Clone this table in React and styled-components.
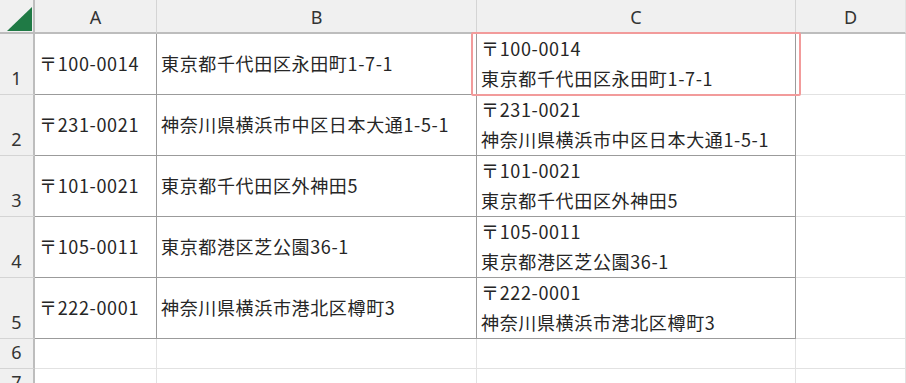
import React from "react";
import styled, { createGlobalStyle } from "styled-components";

const GlobalStyle = createGlobalStyle`
  html, body {
    margin: 0;
    padding: 0;
    background: #ffffff;
  }
  body {
    font-family: "Noto Sans CJK JP", "Noto Sans", sans-serif;
    color: #262626;
  }
`;

const rows = [
  { zip: "〒100-0014", addr: "東京都千代田区永田町1-7-1" },
  { zip: "〒231-0021", addr: "神奈川県横浜市中区日本大通1-5-1" },
  { zip: "〒101-0021", addr: "東京都千代田区外神田5" },
  { zip: "〒105-0011", addr: "東京都港区芝公園36-1" },
  { zip: "〒222-0001", addr: "神奈川県横浜市港北区樽町3" },
];

const Sheet = styled.div`
  position: relative;
  width: 906px;
  height: 383px;
  overflow: hidden;
  display: grid;
  grid-template-columns: 35px 122px 320px 319px 110px;
  grid-template-rows: 34px repeat(5, 61px) 30px 30px;
  font-size: 18px;
`;

const Corner = styled.div`
  background: #f0f0f0;
  border-right: 2px solid #bdbdbd;
  border-bottom: 2px solid #bdbdbd;
  box-sizing: border-box;
  display: flex;
  align-items: flex-end;
  justify-content: flex-end;
  padding: 0 1px 1px 0;
  svg {
    display: block;
  }
`;

const ColHead = styled.div`
  background: #f0f0f0;
  border-right: 1px solid ${(p) => (p.$last ? "#e2e2e2" : "#d4d4d4")};
  border-bottom: 2px solid #bdbdbd;
  box-sizing: border-box;
  display: flex;
  align-items: center;
  justify-content: center;
  font-family: "Noto Sans", "Noto Sans CJK JP", sans-serif;
  font-size: 18px;
  color: #333;
  padding-top: 2px;
`;

const RowHead = styled.div`
  background: #f0f0f0;
  border-right: 2px solid #bdbdbd;
  border-bottom: 1px solid #d4d4d4;
  box-sizing: border-box;
  display: flex;
  align-items: flex-end;
  justify-content: center;
  font-family: "Noto Sans", "Noto Sans CJK JP", sans-serif;
  font-size: 18px;
  line-height: 24px;
  color: #333;
  padding-bottom: 4px;
`;

const Cell = styled.div`
  box-sizing: border-box;
  border-right: 1px solid ${(p) => (p.$table ? "#9b9b9b" : "#e2e2e2")};
  border-bottom: 1px solid ${(p) => (p.$table ? "#9b9b9b" : "#e2e2e2")};
  display: flex;
  flex-direction: column;
  justify-content: center;
  padding: 0 4px 3px;
  white-space: nowrap;
  line-height: 30px;
  letter-spacing: 0.65px;
`;

const Highlight = styled.div`
  position: absolute;
  left: 471px;
  top: 32px;
  width: 330px;
  height: 64px;
  box-sizing: border-box;
  border: 2px solid #f29b9b;
  border-radius: 2px;
  pointer-events: none;
`;

function App() {
  return (
    <>
      <GlobalStyle />
      <Sheet>
        <Corner>
          <svg width="25" height="24" viewBox="0 0 25 24">
            <polygon points="25,0 25,24 0,24" fill="#1f7a45" />
          </svg>
        </Corner>
        <ColHead>A</ColHead>
        <ColHead>B</ColHead>
        <ColHead>C</ColHead>
        <ColHead $last>D</ColHead>

        {rows.map((r, i) => (
          <React.Fragment key={r.zip}>
            <RowHead>{i + 1}</RowHead>
            <Cell $table>{r.zip}</Cell>
            <Cell $table>{r.addr}</Cell>
            <Cell $table>
              <span>{r.zip}</span>
              <span>{r.addr}</span>
            </Cell>
            <Cell />
          </React.Fragment>
        ))}

        {[6, 7].map((n) => (
          <React.Fragment key={n}>
            <RowHead>{n}</RowHead>
            <Cell />
            <Cell />
            <Cell />
            <Cell />
          </React.Fragment>
        ))}
        <Highlight />
      </Sheet>
    </>
  );
}

export default App;
